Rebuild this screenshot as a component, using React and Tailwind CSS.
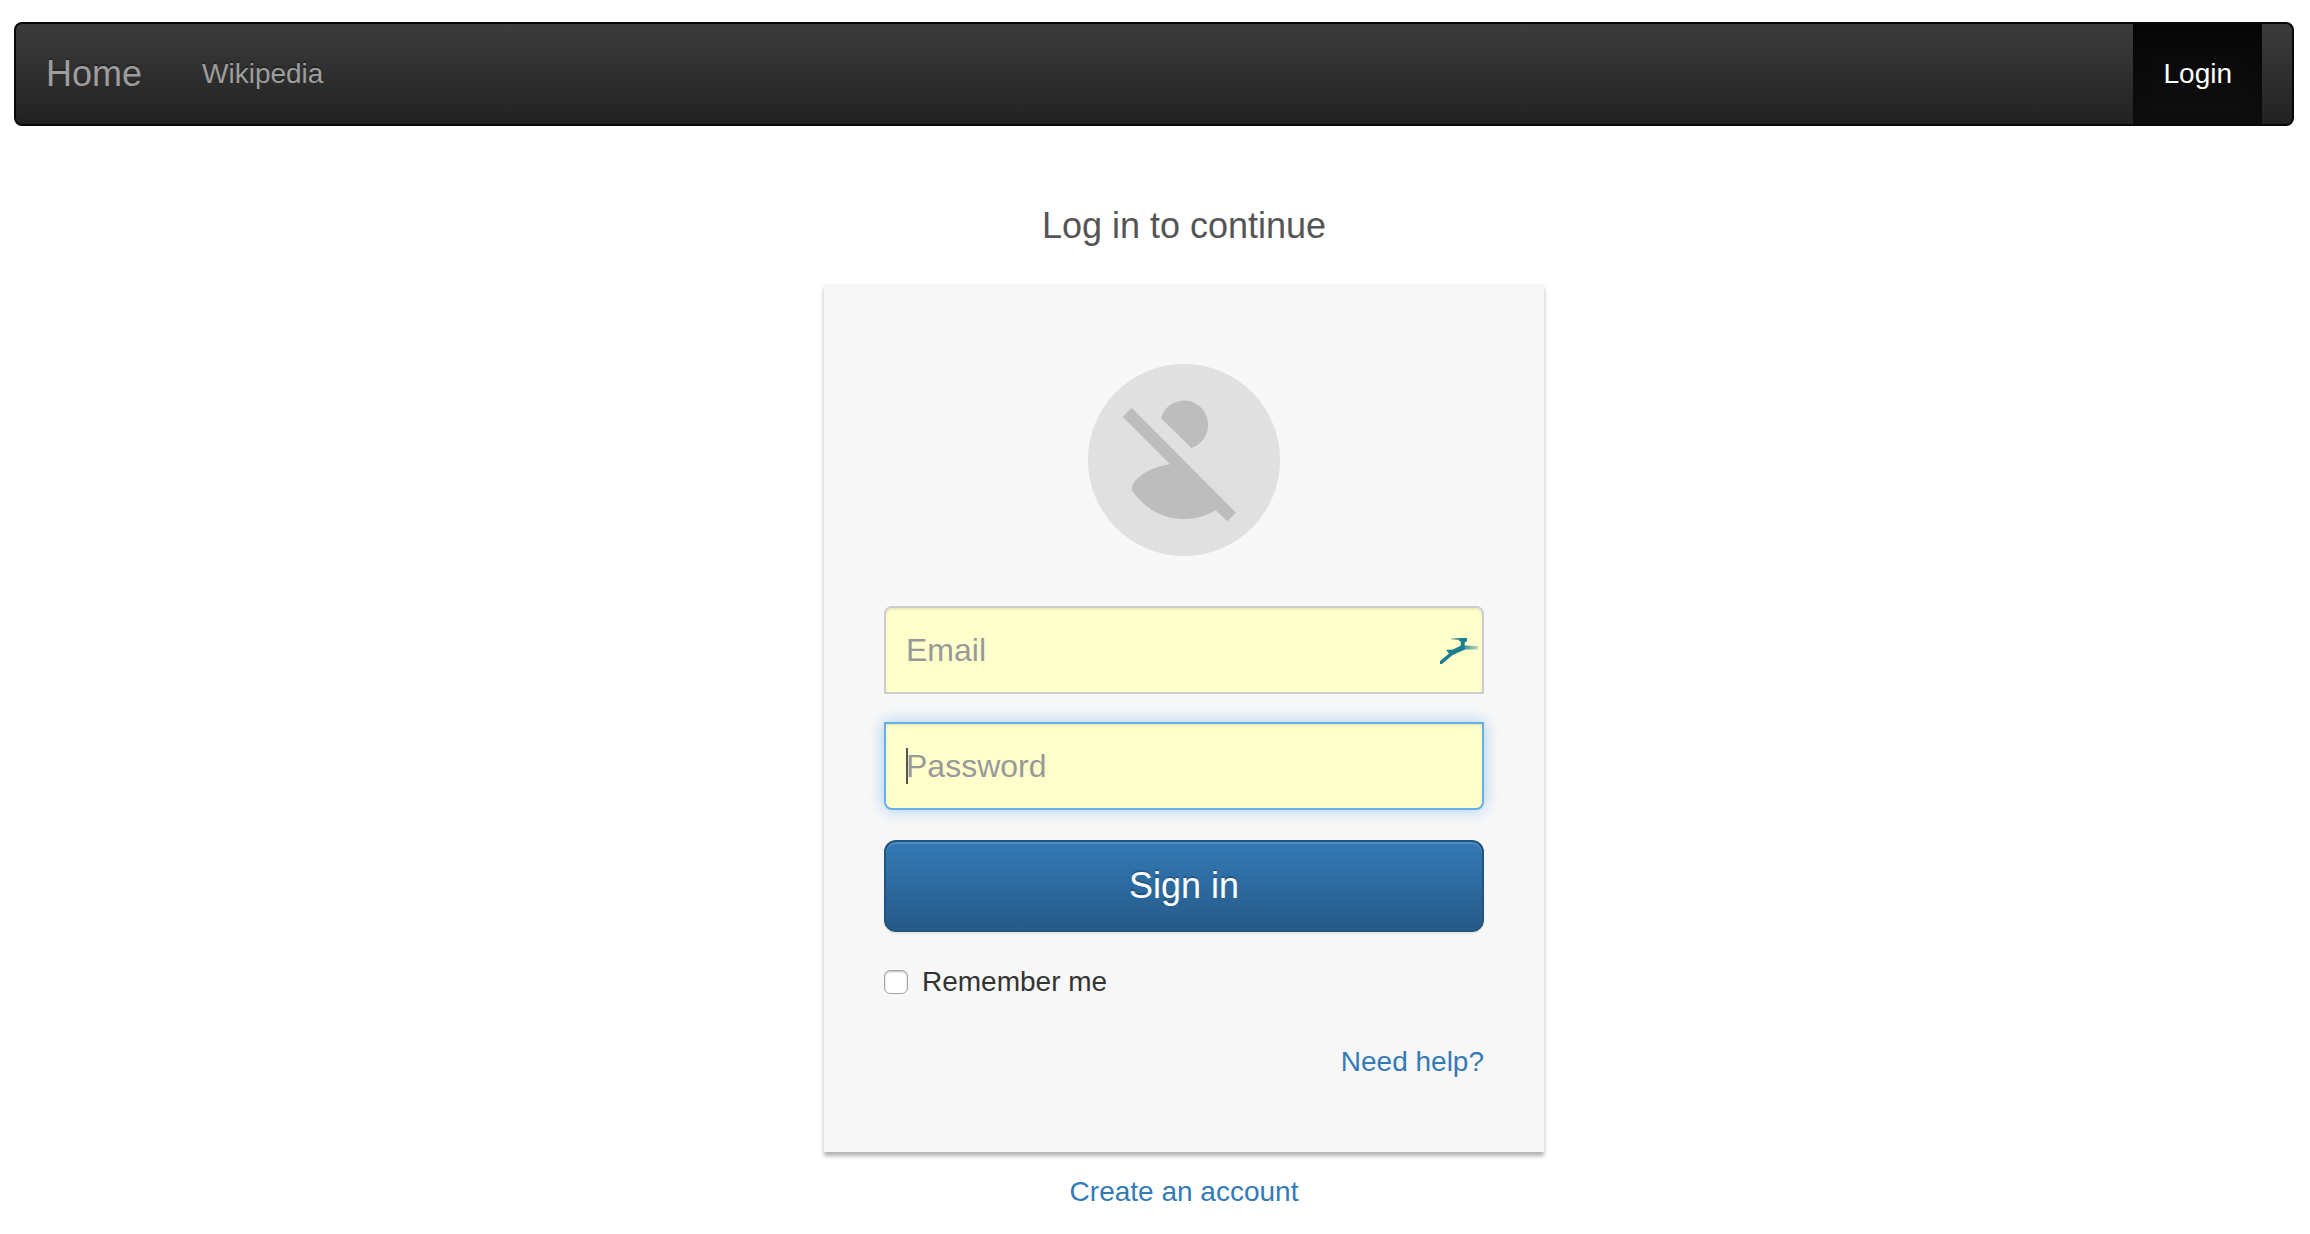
export default function App() {
  return (
    <div className="min-h-screen bg-white pt-[22px] pr-4 pl-[14px] font-['Liberation_Sans',Arial,sans-serif] text-[28px] leading-10 text-[#333333]">
      <nav className="flex items-stretch rounded-lg border-2 border-[#080808] bg-linear-to-b from-[#3c3c3c] to-[#222222] pr-[30px] text-[#9d9d9d] [text-shadow:0_-2px_0_rgba(0,0,0,0.25)]">
        <a href="#home" className="px-[30px] py-[30px] text-[36px]">Home</a>
        <a href="#wikipedia" className="px-[30px] py-[30px]">Wikipedia</a>
        <a
          href="#login"
          className="ml-auto bg-linear-to-b from-[#080808] to-[#0f0f0f] px-[30px] py-[30px] text-white shadow-[inset_0_6px_18px_rgba(0,0,0,0.25)]"
        >
          Login
        </a>
      </nav>

      <main className="flex flex-col items-center pl-[60px]">
        <h1 className="mt-20 text-[36px] text-[#555555]">Log in to continue</h1>

        <form
          className="mt-[38px] flex w-full max-w-[720px] flex-col bg-[#f7f7f7] px-[60px] pt-20 pb-[70px] shadow-[0_4px_4px_rgba(0,0,0,0.3)]"
          onSubmit={(e) => e.preventDefault()}
        >
          <Avatar />

          <div className="relative mt-[50px]">
            <input
              type="email"
              aria-label="Email"
              placeholder="Email"
              className="block h-[88px] w-full rounded-t-lg border-2 border-[#cccccc] bg-[#ffffcc] px-5 text-[32px] text-[#555555] shadow-[inset_0_2px_2px_rgba(0,0,0,0.075)] outline-none placeholder:text-[#999999]"
            />
            <Impala />
          </div>

          <div className="relative mt-7">
            <input
              type="password"
              aria-label="Password"
              placeholder="Password"
              className="block h-[88px] w-full rounded-b-lg border-2 border-[#66afe9] bg-[#ffffcc] px-5 text-[32px] text-[#555555] shadow-[inset_0_2px_2px_rgba(0,0,0,0.075),0_0_16px_rgba(102,175,233,0.6)] outline-none placeholder:text-[#999999]"
            />
            <span aria-hidden="true" className="absolute top-[26px] left-[22px] h-9 w-0.5 bg-[#555555]" />
          </div>

          <button
            type="submit"
            className="mt-[30px] h-[92px] rounded-xl border-2 border-[#245580] bg-linear-to-b from-[#337ab7] to-[#265a88] text-[36px] text-white shadow-[inset_0_2px_0_rgba(255,255,255,0.15),0_2px_2px_rgba(0,0,0,0.075)] [text-shadow:0_-2px_0_rgba(0,0,0,0.2)]"
          >
            Sign in
          </button>

          <label className="mt-[30px] flex items-center gap-[14px] self-start">
            <input
              type="checkbox"
              className="size-6 appearance-none rounded-md border border-[#a8a8a8] bg-white shadow-[inset_0_1px_2px_rgba(0,0,0,0.3)]"
            />
            Remember me
          </label>

          <a href="#help" className="mt-10 self-end text-[#337ab7]">Need help?</a>
        </form>

        <a href="#register" className="mt-5 text-[#337ab7]">Create an account</a>
      </main>
    </div>
  );
}

function Avatar() {
  return (
    <svg viewBox="0 0 192 192" className="size-48 self-center" aria-hidden="true">
      <circle cx="96" cy="96" r="96" fill="#e0e0e0" />
      <g fill="#bdbdbd">
        <path d="M73 54.300 A24 24.300 0 1 1 103.500 84 Z" />
        <path d="M43.700 43.700 L34.700 52.700 L82 100.300 C62 103 44 114 43.700 126 C56 144 74 155 96 155 C108 155 118 152 127.700 146.300 L139.300 157.300 L148 148.700 Z" />
      </g>
    </svg>
  );
}

function Impala() {
  return (
    <svg viewBox="0 0 38 26" className="absolute top-8 right-1.5 h-[26px] w-[38px]" aria-hidden="true">
      <defs>
        <linearGradient id="impala-leg" x1="20" x2="38" y1="0" y2="0" gradientUnits="userSpaceOnUse">
          <stop offset="0" stopColor="#1c7f91" />
          <stop offset="1" stopColor="#1c7f91" stopOpacity="0.3" />
        </linearGradient>
        <linearGradient id="impala-horn" x1="11" x2="21" y1="0" y2="0" gradientUnits="userSpaceOnUse">
          <stop offset="0" stopColor="#1c7f91" stopOpacity="0.3" />
          <stop offset="1" stopColor="#1c7f91" />
        </linearGradient>
        <filter id="impala-soft">
          <feGaussianBlur stdDeviation="0.400" />
        </filter>
      </defs>
      <g filter="url(#impala-soft)">
        <path fill="url(#impala-horn)" d="M11 0 H27 L27 3 L24.500 5 L25 9 L20.500 9 L21 4 L18 2 L11 1.500 Z" />
        <path fill="url(#impala-leg)" d="M20 8 L25 7.500 L38 8 L38 11.500 L26 11.500 L19 13 Z" />
        <path fill="#1c7f91" d="M0 23 L9 15.500 L6 12 L13 11.500 L21 7.500 L24 8 L25 11.500 L17 15 L12 17.500 L2 26 L0 26 Z" />
      </g>
    </svg>
  );
}
